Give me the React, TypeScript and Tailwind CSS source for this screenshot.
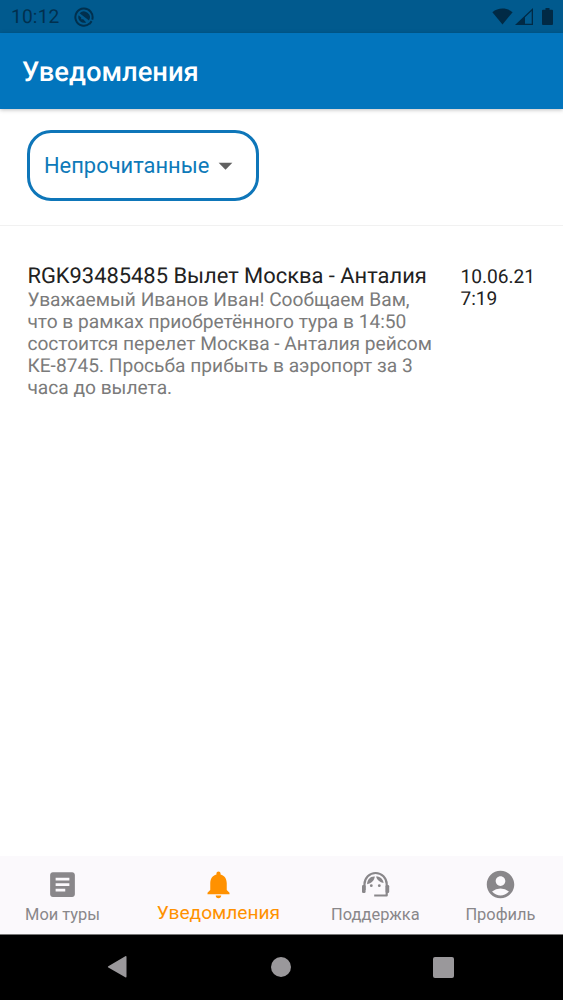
import type { ComponentType } from 'react';
import {
  MdAccountCircle,
  MdArrowDropDown,
  MdArticle,
  MdNotifications,
} from 'react-icons/md';

interface Notification {
  id: number;
  title: string;
  text: string;
  date: string;
  time: string;
}

interface Tab {
  label: string;
  icon: ComponentType<{ className?: string }>;
  active?: boolean;
}

const notifications: Notification[] = [
  {
    id: 1,
    title: 'RGK93485485 Вылет Москва - Анталия',
    text: 'Уважаемый Иванов Иван! Сообщаем Вам, что в рамках приобретённого тура в 14:50 состоится перелет Москва - Анталия рейсом КЕ-8745. Просьба прибыть в аэропорт за 3 часа до вылета.',
    date: '10.06.21',
    time: '7:19',
  },
];

const tabs: Tab[] = [
  { label: 'Мои туры', icon: MdArticle },
  { label: 'Уведомления', icon: MdNotifications, active: true },
  { label: 'Поддержка', icon: SupportIcon },
  { label: 'Профиль', icon: MdAccountCircle },
];

function SupportIcon({ className }: { className?: string }) {
  return (
    <svg className={className} viewBox="0 0 33 33" fill="currentColor">
      <path
        d="M5.5 22V16.1a11.1 11.1 0 0 1 22.2 0V27.5H15.2"
        fill="none"
        stroke="currentColor"
        strokeWidth="2.2"
        strokeLinejoin="round"
      />
      <rect x="3" y="17" width="3.6" height="8" rx="1.3" />
      <rect x="26.6" y="17" width="3.6" height="8" rx="1.3" />
      <path d="M15.8 8.6C11.5 8.2 8.1 11.600 8.1 16.3C12.3 15.300 15.4 12.600 15.8 8.6Z" />
      <path d="M17 8.6C18 12.200 20.8 14.500 24.600 15C24 11 20.900 8.3 17 8.6Z" />
      <circle cx="12.3" cy="17.7" r="1.4" />
      <circle cx="20.3" cy="17.7" r="1.4" />
    </svg>
  );
}

function StatusBar() {
  return (
    <div className="flex h-[33px] items-center bg-[#015a8e] pl-[11px] pr-[10px] text-[#01304e]">
      <span className="w-[49px] pt-px text-[19.2px] leading-[32px] tracking-[0.15px]">10:12</span>
      <svg className="ml-[14px]" width="20" height="20" viewBox="0 0 20 20" fill="none">
        <path
          d="M15.6 16.6A8.6 8.6 0 1 1 18.2 12.6"
          stroke="currentColor"
          strokeWidth="2"
        />
        <path d="M5.6 6.2a6 6 0 0 1 9.4 7.3Z" fill="currentColor" />
        <path d="M4.6 8.2a5.8 5.8 0 0 0 7.6 7.2l-3-3.1H7.2v-1.8Z" fill="currentColor" />
        <path d="M15.6 16.8l2-2.6" stroke="currentColor" strokeWidth="2" />
      </svg>
      <div className="ml-auto flex items-center text-[#012a45]">
        <svg width="21" height="17" viewBox="0 0 21 17">
          <path d="M0.4 4.2C6 -0.7 15 -0.7 20.6 4.2L10.5 16.5Z" fill="currentColor" />
        </svg>
        <svg className="ml-[2px]" width="18" height="17" viewBox="0 0 18 17">
          <path
            fillRule="evenodd"
            d="M0 17L18 0V17ZM10 15.7H16.7V3L10 9.3Z"
            fill="currentColor"
          />
        </svg>
        <svg className="ml-[9px]" width="11" height="17" viewBox="0 0 11 17">
          <path
            d="M3.5 0h4v1.7H10a1 1 0 0 1 1 1V16a1 1 0 0 1-1 1H1a1 1 0 0 1-1-1V2.7a1 1 0 0 1 1-1h2.5Z"
            fill="currentColor"
          />
        </svg>
      </div>
    </div>
  );
}

function NotificationRow({ item }: { item: Notification }) {
  return (
    <div className="flex pl-[27.4px] pr-[20px] pt-[38px]">
      <div className="w-[433px]">
        <h2 className="whitespace-nowrap text-[21.9px] leading-[25px] text-[#212121]">
          {item.title}
        </h2>
        <p className="w-[410px] text-[19.16px] leading-[22px] text-[#7b7b7b]">
          {item.text}
        </p>
      </div>
      <div className="pt-[2px] text-[19.16px] leading-[22px] text-[#212121]">
        <div>{item.date}</div>
        <div>{item.time}</div>
      </div>
    </div>
  );
}

function BottomTabs() {
  return (
    <nav className="grid h-[79px] grid-cols-[1fr_1.5fr_1fr_1fr] border-b border-[#777777] bg-[#fbf9fc]">
      {tabs.map(({ label, icon: Icon, active }) => (
        <button
          key={label}
          className={`flex flex-col items-center whitespace-nowrap pt-[12px] ${
            active ? 'text-[#ff9100]' : 'text-[#89878a]'
          }`}
        >
          <Icon className="size-[33px]" />
          <span
            className={
              active
                ? 'pr-px text-[19.16px] leading-[24px]'
                : 'pt-[2px] text-[16.42px] leading-[24px]'
            }
          >
            {label}
          </span>
        </button>
      ))}
    </nav>
  );
}

function SystemNavigation() {
  return (
    <div className="flex h-[65px] items-center justify-between bg-black pb-px pl-[107px] pr-[109px] text-[#9a989b]">
      <svg width="20" height="24" viewBox="0 0 20 24">
        <path
          d="M1.3 11.2L18.3 1.2Q19.5 0.6 19.5 2V21.5Q19.5 22.9 18.3 22.2L1.3 12.6Q0.2 11.9 1.3 11.2Z"
          fill="currentColor"
        />
      </svg>
      <div className="ml-[2px] size-5 rounded-full bg-[#9a989b]" />
      <div className="size-[21px] rounded-[2px] bg-[#9a989b]" />
    </div>
  );
}

export default function App() {
  return (
    <div className="flex h-[1000px] w-[563px] flex-col overflow-hidden bg-white font-[Roboto,sans-serif] [text-rendering:geometricPrecision]">
      <StatusBar />
      <header className="z-10 flex h-[76px] shrink-0 items-center bg-[#0275bd] pl-[22px] pt-[2px] shadow-[0_1px_4px_rgba(0,0,0,0.25)]">
        <h1 className="text-[27.37px] font-medium leading-[32px] text-white">
          Уведомления
        </h1>
      </header>

      {/* Filter */}
      <div className="h-[117px] border-b border-[#f1f1f1] pl-[27px] pt-[21px]">
        <button className="flex h-[71px] w-[231.5px] items-center rounded-[24px] border-[3px] border-[#0e76b9] pl-[14px] text-[#0e7ab9]">
          <span className="text-[21.9px] leading-[28px]">Непрочитанные</span>
          <MdArrowDropDown className="size-[33px] text-[#616161]" />
        </button>
      </div>

      <main className="flex-1">
        {notifications.map(item => (
          <NotificationRow key={item.id} item={item} />
        ))}
      </main>

      <BottomTabs />
      <SystemNavigation />
    </div>
  );
}
